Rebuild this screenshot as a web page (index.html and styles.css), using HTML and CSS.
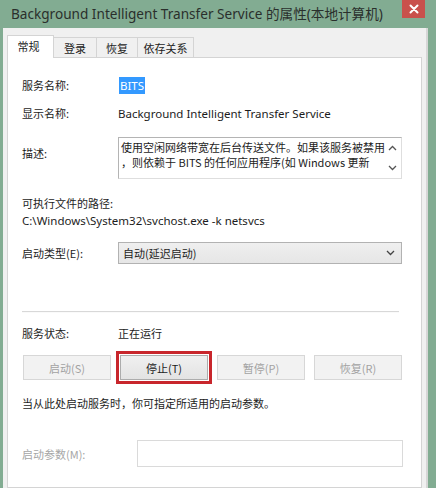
FILE: index.html
```html
<!DOCTYPE html>
<html lang="zh-CN">
<head>
<meta charset="utf-8">
<title>BITS 属性</title>
<link rel="stylesheet" href="styles.css">
</head>
<body>
<div class="window">
  <div class="titlebar">
    <div class="title">Background Intelligent Transfer Service 的属性(本地计算机)</div>
    <div class="close">
      <svg width="10" height="10" viewBox="0 0 10 10"><path d="M1.5 1.5 L8.5 8.5 M8.5 1.5 L1.5 8.5" stroke="#fff" stroke-width="2" stroke-linecap="round"/></svg>
    </div>
  </div>
  <div class="client">
    <div class="tabs">
      <div class="tab active">常规</div>
      <div class="tab t2">登录</div>
      <div class="tab t3">恢复</div>
      <div class="tab t4">依存关系</div>
    </div>
    <div class="panel">
      <div class="row r-name">
        <div class="label">服务名称:</div>
        <div class="value"><span class="sel">BITS</span></div>
      </div>
      <div class="row r-display">
        <div class="label">显示名称:</div>
        <div class="value">Background Intelligent Transfer Service</div>
      </div>
      <div class="row r-desc">
        <div class="label desc-label">描述:</div>
        <div class="descbox">
          <div class="desctext">使用空闲网络带宽在后台传送文件。如果该服务被禁用<br>，则依赖于 BITS 的任何应用程序(如 Windows 更新</div>
          <div class="scroll">
            <svg width="9" height="6" viewBox="0 0 9 6"><path d="M1 5 L4.5 1.5 L8 5" fill="none" stroke="#555" stroke-width="1.3"/></svg>
            <svg width="9" height="6" viewBox="0 0 9 6"><path d="M1 1 L4.5 4.5 L8 1" fill="none" stroke="#555" stroke-width="1.3"/></svg>
          </div>
        </div>
      </div>
      <div class="r-exe-label">可执行文件的路径:</div>
      <div class="r-exe-path">C:\Windows\System32\svchost.exe -k netsvcs</div>
      <div class="row r-type">
        <div class="label">启动类型(E):</div>
        <div class="combo">
          <span>自动(延迟启动)</span>
          <svg width="9" height="6" viewBox="0 0 9 6"><path d="M1 1 L4.5 4.5 L8 1" fill="none" stroke="#444" stroke-width="1.3"/></svg>
        </div>
      </div>
      <div class="sep"></div>
      <div class="row r-status">
        <div class="label">服务状态:</div>
        <div class="value cjk">正在运行</div>
      </div>
      <div class="buttons">
        <div class="btn disabled">启动(S)</div>
        <div class="btn primary">停止(T)</div>
        <div class="btn disabled">暂停(P)</div>
        <div class="btn disabled">恢复(R)</div>
      </div>
      <div class="hint">当从此处启动服务时，你可指定所适用的启动参数。</div>
      <div class="row r-param">
        <div class="label param-label">启动参数(M):</div>
        <div class="param-input"></div>
      </div>
    </div>
  </div>
</div>
</body>
</html>
```

FILE: styles.css
```css
* { box-sizing: border-box; }
html, body { margin: 0; padding: 0; }
body {
  background: #82ac92;
  font-family: "Segoe UI", "Noto Sans", "Noto Sans CJK SC", sans-serif;
  font-size: 11.5px;
  color: #1c1c1c;
}
.window {
  width: 436px;
  height: 488px;
  overflow: hidden;
  background: #82ac92;
  display: flex;
  flex-direction: column;
}
.titlebar {
  height: 28px;
  flex: none;
  display: flex;
  align-items: flex-start;
  justify-content: space-between;
}
.title {
  margin: 4px 0 0 11px;
  font-family: "Noto Sans", "Noto Sans CJK SC", sans-serif;
  font-size: 13.6px;
  line-height: 20px;
  color: #2a2f2c;
  white-space: nowrap;
}
.close {
  width: 23px;
  height: 18px;
  margin-right: 11px;
  background: #c9514c;
  display: flex;
  align-items: center;
  justify-content: center;
  flex: none;
}
.client {
  flex: 1;
  margin: 0 8px 0 3px;
  padding: 0 6px 0 4px;
  background: #f0f0f0;
  box-shadow: inset -2px 0 0 #d6d6d6;
  display: flex;
  flex-direction: column;
}
.cjk, .label, .tab, .combo, .btn, .hint, .r-exe-label, .desctext {
  font-family: "Noto Sans CJK SC", sans-serif;
  font-size: 11px;
}
.tabs {
  display: flex;
  align-items: flex-end;
  padding-top: 7px;
  position: relative;
  z-index: 1;
}
.tab {
  height: 20px;
  border: 1px solid #d4d4d4;
  border-bottom: none;
  border-left: none;
  background: #f0f0f0;
  display: flex;
  align-items: center;
  justify-content: center;
  white-space: nowrap;
  flex: none;
}
.tab.active {
  height: 23px;
  width: 47px;
  border-left: 1px solid #d4d4d4;
  background: #ffffff;
  margin-bottom: -1px;
  padding-bottom: 2px;
  padding-right: 4px;
}
.t2 { width: 43px; }
.t3 { width: 41px; }
.t4 { width: 56px; }
.panel {
  flex: 1;
  background: #ffffff;
  border: 1px solid #d4d4d4;
  padding: 17px 18px 0 14px;
}
.row {
  display: flex;
  align-items: center;
}
.label {
  width: 96px;
  flex: none;
}
.value {
  white-space: nowrap;
}
.r-name { height: 20px; }
.sel {
  background: #3399ff;
  color: #fff;
  padding: 1px 1px;
  margin-left: 1px;
}
.r-display { height: 20px; margin-top: 8px; }
.r-desc { margin-top: 14px; align-items: flex-start; }
.desc-label { margin-top: 8px; }
.descbox {
  width: 284px;
  height: 42px;
  border: 1px solid #b4b4b4;
  border-right-color: #dedede;
  border-bottom-color: #dedede;
  display: flex;
  justify-content: space-between;
}
.desctext {
  padding: 2px 0 0 2px;
  line-height: 15px;
  white-space: nowrap;
}
.scroll {
  width: 14px;
  display: flex;
  flex-direction: column;
  justify-content: space-between;
  align-items: center;
  padding: 7px 4px 7px 0;
}
.r-exe-label {
  margin-top: 15px;
  height: 18px;
  line-height: 18px;
}
.r-exe-path {
  height: 18px;
  line-height: 18px;
  white-space: nowrap;
}
.r-type { margin-top: 12px; }
.combo {
  width: 284px;
  height: 22px;
  border: 1px solid #b2b2b2;
  background: linear-gradient(#efefef, #e6e6e6);
  display: flex;
  align-items: center;
  justify-content: space-between;
  padding: 0 6px 0 4px;
}
.sep {
  margin-top: 47px;
  height: 2px;
  border-top: 1px solid #d8d8d8;
  border-bottom: 1px solid #fafafa;
  width: 377px;
}
.r-status { height: 20px; margin-top: 10px; }
.buttons {
  display: flex;
  gap: 9px;
  margin-top: 12px;
  margin-left: 1px;
}
.btn {
  width: 88px;
  height: 25px;
  display: flex;
  align-items: center;
  justify-content: center;
  border: 1px solid #acacac;
  background: #e4e4e4;
}
.btn.disabled {
  color: #a2a2a2;
  background: #f2f2f2;
  border-color: #d7d7d7;
}
.btn.primary {
  outline: 3px solid #c8262c;
  outline-offset: 1px;
  background: linear-gradient(#f0f0f0, #e3e3e3);
}
.hint {
  margin-top: 14px;
  height: 18px;
  line-height: 18px;
  white-space: nowrap;
}
.r-param { margin-top: 28px; }
.param-label {
  width: 115px;
  color: #a6a6a6;
}
.param-input {
  width: 266px;
  height: 27px;
  border: 1px solid #dadada;
  background: #fff;
}
```
